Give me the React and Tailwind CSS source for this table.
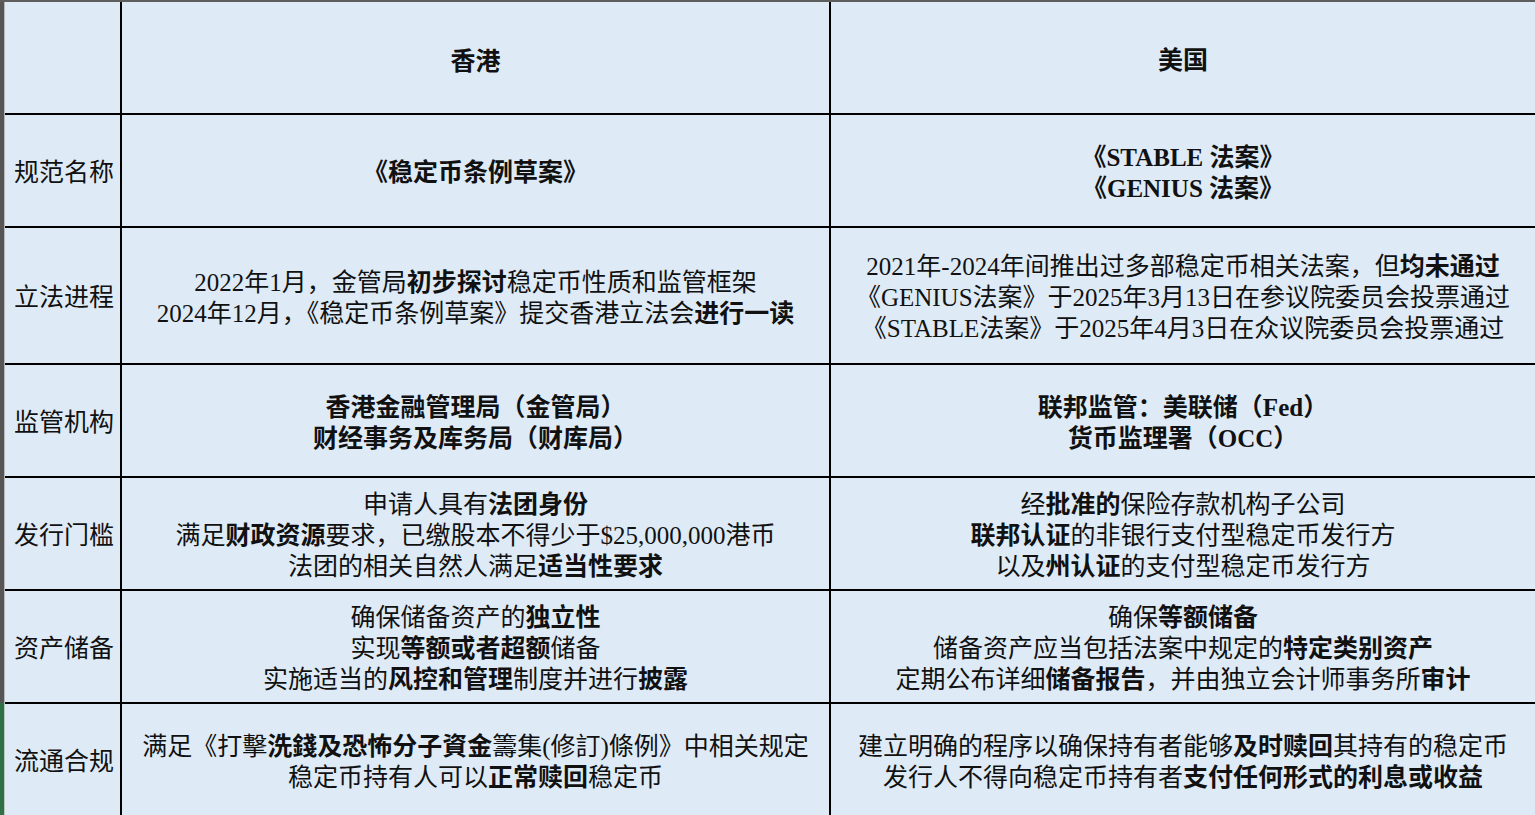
import React from "react";

// each line is a list of [text, bold]
const rows = [
  {
    label: "规范名称",
    hk: [[["《稳定币条例草案》", true]]],
    us: [[["《STABLE 法案》", true]], [["《GENIUS 法案》", true]]],
  },
  {
    label: "立法进程",
    hk: [
      [["2022年1月，金管局", false], ["初步探讨", true], ["稳定币性质和监管框架", false]],
      [["2024年12月，《稳定币条例草案》提交香港立法会", false], ["进行一读", true]],
    ],
    us: [
      [["2021年-2024年间推出过多部稳定币相关法案，但", false], ["均未通过", true]],
      [["《GENIUS法案》于2025年3月13日在参议院委员会投票通过", false]],
      [["《STABLE法案》于2025年4月3日在众议院委员会投票通过", false]],
    ],
  },
  {
    label: "监管机构",
    hk: [[["香港金融管理局（金管局）", true]], [["财经事务及库务局（财库局）", true]]],
    us: [[["联邦监管：美联储（Fed）", true]], [["货币监理署（OCC）", true]]],
  },
  {
    label: "发行门槛",
    hk: [
      [["申请人具有", false], ["法团身份", true]],
      [["满足", false], ["财政资源", true], ["要求，已缴股本不得少于$25,000,000港币", false]],
      [["法团的相关自然人满足", false], ["适当性要求", true]],
    ],
    us: [
      [["经", false], ["批准的", true], ["保险存款机构子公司", false]],
      [["联邦认证", true], ["的非银行支付型稳定币发行方", false]],
      [["以及", false], ["州认证", true], ["的支付型稳定币发行方", false]],
    ],
  },
  {
    label: "资产储备",
    hk: [
      [["确保储备资产的", false], ["独立性", true]],
      [["实现", false], ["等额或者超额", true], ["储备", false]],
      [["实施适当的", false], ["风控和管理", true], ["制度并进行", false], ["披露", true]],
    ],
    us: [
      [["确保", false], ["等额储备", true]],
      [["储备资产应当包括法案中规定的", false], ["特定类别资产", true]],
      [["定期公布详细", false], ["储备报告", true], ["，并由独立会计师事务所", false], ["审计", true]],
    ],
  },
  {
    label: "流通合规",
    hk: [
      [["满足《打擊", false], ["洗錢及恐怖分子資金", true], ["籌集(修訂)條例》中相关规定", false]],
      [["稳定币持有人可以", false], ["正常赎回", true], ["稳定币", false]],
    ],
    us: [
      [["建立明确的程序以确保持有者能够", false], ["及时赎回", true], ["其持有的稳定币", false]],
      [["发行人不得向稳定币持有者", false], ["支付任何形式的利息或收益", true]],
    ],
  },
];

const Lines = ({ lines }) => (
  <div>
    {lines.map((line, i) => (
      <div key={i} className="whitespace-nowrap">
        {line.map(([text, bold], j) => (
          <span key={j} className={bold ? "font-bold" : "font-normal"}>
            {text}
          </span>
        ))}
      </div>
    ))}
  </div>
);

const App = () => {
  return (
    <div className="flex h-[815px] w-[1535px] flex-col overflow-hidden bg-[#deebf7] font-['Liberation_Serif','Noto_Sans_CJK_SC',serif] text-[25px] leading-[31px] text-[#111]">
      <div className="h-[2px] bg-[#5e5e5e]" />
      <div className="flex flex-1">
        <div className="flex w-[5px] flex-col">
          <div className="h-[701px] border-r border-[#b8b8b8] bg-[#555555]" />
          <div className="flex-1 border-r border-[#b8c9b8] bg-[#2f7048]" />
        </div>
        <div className="grid flex-1 grid-cols-[117px_709px_1fr] grid-rows-[113px_113px_137px_113px_113px_113px_1fr]">
          <div className="border-r-2 border-b-2 border-black" />
          <div className="flex items-center justify-center border-r-2 border-b-2 border-black pt-[7px] font-bold">
            香港
          </div>
          <div className="flex items-center justify-center border-b-2 border-black pt-[5px] font-bold">
            美国
          </div>
          {rows.map((row, i) => {
            const last = i === rows.length - 1;
            const bb = last ? "" : "border-b-2";
            return (
              <React.Fragment key={row.label}>
                <div className={`flex items-center border-r-2 border-black pt-[4px] pl-[9px] ${bb}`}>
                  {row.label}
                </div>
                <div className={`flex items-center justify-center border-r-2 border-black pt-[4px] text-center ${bb}`}>
                  <Lines lines={row.hk} />
                </div>
                <div className={`flex items-center justify-center border-black pt-[4px] text-center ${bb}`}>
                  <Lines lines={row.us} />
                </div>
              </React.Fragment>
            );
          })}
        </div>
      </div>
    </div>
  );
};

export default App;
